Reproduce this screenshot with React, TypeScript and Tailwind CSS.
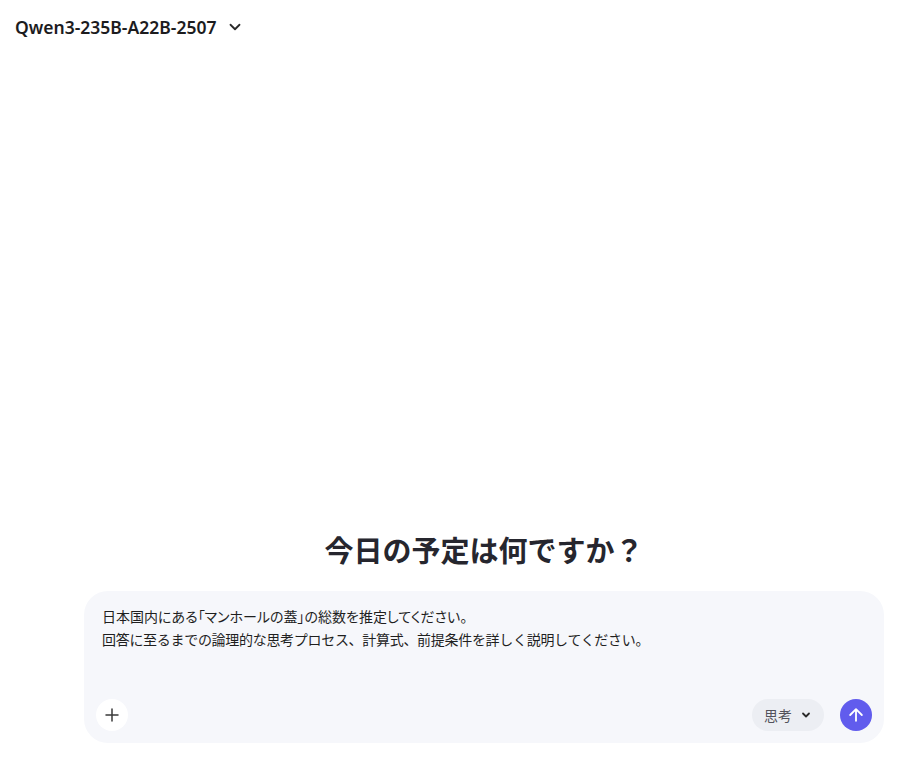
import React from "react";

export default function App() {
  return (
    <div
      className="w-[904px] h-[763px] bg-white flex flex-col overflow-hidden"
      style={{ fontFamily: '"Noto Sans", "Noto Sans CJK JP", sans-serif' }}
    >
      <div className="h-[54px] flex items-center pl-[15px] gap-[10px]">
        <span className="text-[17.5px] font-semibold text-[#1c1c1e]">
          Qwen3-235B-A22B-2507
        </span>
        <svg width="18" height="18" viewBox="0 0 24 24" fill="none" stroke="#2a2a2a" strokeWidth="2.4" strokeLinecap="round" strokeLinejoin="round">
          <path d="M6 9l6 6 6-6" />
        </svg>
      </div>
      <div className="flex-1" />
      <div className="flex flex-col items-center pl-[84px] pr-[20px] pb-[20px]">
        <h1
          className="text-[29px] font-bold text-[#26262e] leading-[40px] mb-[22px]"
          style={{ fontFamily: '"Noto Sans CJK JP", sans-serif' }}
        >
          今日の予定は何ですか？
        </h1>
        <div className="w-[800px] h-[152px] rounded-[24px] bg-[#f6f7fb] flex flex-col pt-[14px] pb-[12px] px-[12px]">
          <div
            className="flex-1 px-[6px] text-[14px] leading-[23px] text-[#1f1f1f]"
            style={{ fontFamily: '"Noto Sans CJK JP", sans-serif' }}
          >
            <div style={{ fontFeatureSettings: '"palt"' }}>日本国内にある「マンホールの蓋」の総数を推定してください。</div>
            <div className="tracking-[-0.3px]">回答に至るまでの論理的な思考プロセス、計算式、前提条件を詳しく説明してください。</div>
          </div>
          <div className="flex items-center">
            <button className="w-[32px] h-[32px] rounded-full bg-white flex items-center justify-center">
              <svg width="18" height="18" viewBox="0 0 24 24" fill="none" stroke="#3a3a3a" strokeWidth="2" strokeLinecap="round">
                <path d="M12 4v16M4 12h16" />
              </svg>
            </button>
            <div className="flex-1" />
            <div className="h-[32px] pl-[12px] pr-[12px] rounded-full bg-[#eceef3] flex items-center gap-[8px] mr-[16px]">
              <span
                className="text-[14px] text-[#52525b]"
                style={{ fontFamily: '"Noto Sans CJK JP", sans-serif' }}
              >
                思考
              </span>
              <svg width="12" height="12" viewBox="0 0 24 24" fill="none" stroke="#2a2a2a" strokeWidth="3.6" strokeLinecap="round" strokeLinejoin="round">
                <path d="M6 9l6 6 6-6" />
              </svg>
            </div>
            <button className="w-[32px] h-[32px] rounded-full bg-[#615ced] flex items-center justify-center">
              <svg width="20" height="20" viewBox="0 0 24 24" fill="none" stroke="white" strokeWidth="2.2" strokeLinecap="round" strokeLinejoin="round">
                <path d="M12 19V5M5 12l7-7 7 7" />
              </svg>
            </button>
          </div>
        </div>
      </div>
    </div>
  );
}
